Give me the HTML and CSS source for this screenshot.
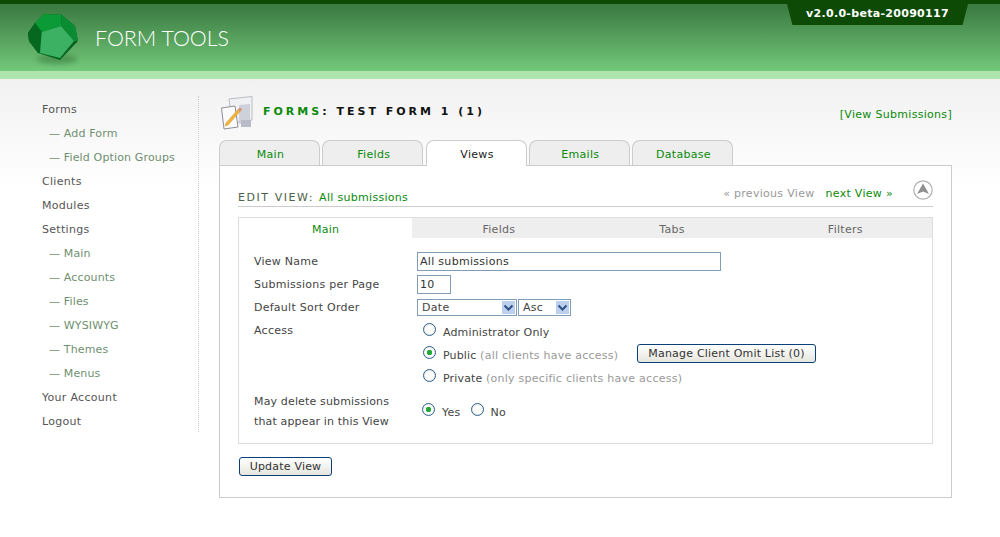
FILE: index.html
```html
<!DOCTYPE html>
<html lang="en">
<head>
    <meta charset="UTF-8">
    <meta name="viewport" content="width=device-width, initial-scale=1.0">
    <title>Form Tools</title>
    <link rel="stylesheet" href="styles.css">
</head>
<body>
    <header class="header">
        <div class="brand">
            <svg class="logo" width="60" height="58" viewBox="0 0 60 58">
                <defs>
                    <filter id="soft" x="-30%" y="-100%" width="160%" height="300%">
                        <feGaussianBlur stdDeviation="2.5"/>
                    </filter>
                </defs>
                <ellipse cx="29" cy="45" rx="20" ry="5" fill="#2c6a30" opacity="0.45" filter="url(#soft)"/>
                <polygon points="16,0 33.6,0.7 47,12 50,27 32,46 10,39 1,27 0,19 7,9" fill="#05641c"/>
                <polygon points="16,0 33.6,0.7 33,12 13.7,18 7,9" fill="#0a9a36"/>
                <polygon points="33.6,0.7 47,12 50,27 46,27 33,12" fill="#0a8c32"/>
                <polygon points="7,9 0,19 1,27 10,39 12,39 13.7,18" fill="#06681f"/>
                <polygon points="13.7,18 33,12 46,27 32,44 12,39" fill="#3cb063"/>
            </svg>
            <span class="brand-name">FORM TOOLS</span>
        </div>
        <div class="version">v2.0.0-beta-20090117</div>
    </header>

    <div class="page">
        <nav class="sidebar">
            <a class="nav-item">Forms</a>
            <a class="nav-item sub">Add Form</a>
            <a class="nav-item sub">Field Option Groups</a>
            <a class="nav-item">Clients</a>
            <a class="nav-item">Modules</a>
            <a class="nav-item">Settings</a>
            <a class="nav-item sub">Main</a>
            <a class="nav-item sub">Accounts</a>
            <a class="nav-item sub">Files</a>
            <a class="nav-item sub">WYSIWYG</a>
            <a class="nav-item sub">Themes</a>
            <a class="nav-item sub">Menus</a>
            <a class="nav-item">Your Account</a>
            <a class="nav-item">Logout</a>
        </nav>

        <main class="content">
            <div class="title-row">
                <svg class="title-icon" width="34" height="36" viewBox="0 0 34 36">
                    <path d="M9 3 L32 0.5 V24 L12 27 Z" fill="#f0f1f4" stroke="#b9bcc3"/>
                    <path d="M19 9 L30 8 V27 L19 28 Z" fill="#cfd1da"/>
                    <path d="M21 24 H31 V31 H21 Z" fill="#b9bcc8"/>
                    <path d="M1.5 12 L15 10 L18 31 L4 33 Z" fill="#fbfbfb" stroke="#8d9097"/>
                    <path d="M6 27 L18 13.5 L20 15.5 L8 29 L5 30 Z" fill="#f2b33d" stroke="#d0952e" stroke-width="0.5"/>
                    <path d="M18 13.5 L20 11.5 L22 13.5 L20 15.5 Z" fill="#d98a6a"/>
                </svg>
                <h1 class="title"><span class="title-green">Forms</span>: Test Form 1 (1)</h1>
                <a class="view-link">[View Submissions]</a>
            </div>

            <div class="tabs">
                <a class="tab">Main</a>
                <a class="tab">Fields</a>
                <a class="tab active">Views</a>
                <a class="tab">Emails</a>
                <a class="tab">Database</a>
            </div>

            <section class="panel">
                <div class="edit-head">
                    <div class="edit-title">EDIT VIEW: <span class="green">All submissions</span></div>
                    <div class="edit-nav">
                        <span class="prev">« previous View</span>
                        <a class="green next">next View »</a>
                        <svg class="up-icon" width="20" height="20" viewBox="0 0 20 20">
                            <circle cx="10" cy="10" r="9.2" fill="#fff" stroke="#b0b0b0" stroke-width="1.2"/>
                            <path d="M10 3.5 L16 14 L10 11.5 L4 14 Z" fill="#8f8f8f"/>
                        </svg>
                    </div>
                </div>

                <div class="inner">
                    <div class="subtabs">
                        <a class="subtab active">Main</a>
                        <a class="subtab">Fields</a>
                        <a class="subtab">Tabs</a>
                        <a class="subtab">Filters</a>
                    </div>
                    <form class="view-form">
                        <label class="row-label">View Name</label>
                        <div class="row-value"><input class="text-input name-input" type="text" value="All submissions"></div>

                        <label class="row-label">Submissions per Page</label>
                        <div class="row-value"><input class="text-input num-input" type="text" value="10"></div>

                        <label class="row-label">Default Sort Order</label>
                        <div class="row-value selects">
                            <div class="select-wrap date-select">
                                <select><option>Date</option></select>
                                <svg class="select-arrow" width="13" height="13" viewBox="0 0 13 13"><rect width="13" height="13" fill="#bcd0ee"/><path d="M2.5 4.5 L6.5 8.5 L10.5 4.5" fill="none" stroke="#2b4f86" stroke-width="2"/></svg>
                            </div>
                            <div class="select-wrap asc-select">
                                <select><option>Asc</option></select>
                                <svg class="select-arrow" width="13" height="13" viewBox="0 0 13 13"><rect width="13" height="13" fill="#bcd0ee"/><path d="M2.5 4.5 L6.5 8.5 L10.5 4.5" fill="none" stroke="#2b4f86" stroke-width="2"/></svg>
                            </div>
                        </div>

                        <label class="row-label access-label">Access</label>
                        <div class="row-value access">
                            <div class="radio-row"><input type="radio" name="access"><span>Administrator Only</span></div>
                            <div class="radio-row"><input type="radio" name="access" checked><span>Public <em>(all clients have access)</em></span><button type="button" class="btn omit-btn">Manage Client Omit List (0)</button></div>
                            <div class="radio-row"><input type="radio" name="access"><span>Private <em>(only specific clients have access)</em></span></div>
                        </div>

                        <label class="row-label delete-label">May delete submissions<br>that appear in this View</label>
                        <div class="row-value yes-no">
                            <input type="radio" name="del" checked><span>Yes</span>
                            <input type="radio" name="del"><span>No</span>
                        </div>
                    </form>
                </div>
                <button type="button" class="btn update-btn">Update View</button>
            </section>
        </main>
    </div>
</body>
</html>
```

FILE: styles.css
```css
* {
    box-sizing: border-box;
}
html, body {
    height: 100%;
}
body {
    margin: 0;
    font-family: "DejaVu Sans", Verdana, sans-serif;
    font-size: 11px;
    color: #444;
    background: #fff;
    overflow: hidden;
}
.header {
    height: 79px;
    display: flex;
    justify-content: space-between;
    background: linear-gradient(#3d7d43 4px, #76cd7e 71px);
    border-top: 4px solid #0c4a05;
    border-bottom: 8px solid #ade5ad;
}
.brand {
    display: flex;
    align-items: flex-start;
    padding: 10px 0 0 28px;
}
.logo {
    display: block;
}
.brand-name {
    margin: 10px 0 0 7px;
    font-family: Lato, sans-serif;
    font-size: 21.4px;
    font-weight: 300;
    line-height: 28px;
    color: #fff;
}
.version {
    width: 181px;
    height: 21px;
    margin-right: 32px;
    background: #0c4a05;
    clip-path: polygon(0 0, 100% 0, 97% 100%, 3% 100%);
    color: #fff;
    font-weight: bold;
    font-size: 11px;
    line-height: 19px;
    text-align: center;
    letter-spacing: 0.3px;
}
.page {
    display: flex;
    align-items: flex-start;
    padding: 17px 48px 0 0;
    background: linear-gradient(#f1f1f1, #fff 110px);
    height: calc(100% - 79px);
}
.sidebar {
    width: 199px;
    flex: none;
    display: flex;
    flex-direction: column;
    padding-left: 42px;
    border-right: 1px dotted #ccc;
}
.nav-item {
    height: 24px;
    line-height: 28px;
    color: #555;
    letter-spacing: 0.3px;
}
.nav-item.sub {
    padding-left: 7px;
    color: #6f8f6f;
    letter-spacing: 0.15px;
}
.nav-item.sub::before {
    content: "— ";
}
.content {
    margin-left: 20px;
    flex: 1;
}
.title-row {
    display: flex;
    align-items: flex-start;
    height: 44px;
}
.title-icon {
    margin-left: 1px;
}
.title {
    margin: 9px 0 0 9px;
    font-size: 11px;
    line-height: 14px;
    font-weight: bold;
    color: #111;
    text-transform: uppercase;
    letter-spacing: 3px;
}
.title-green {
    color: #0a8a0a;
}
.view-link {
    margin: 12px 0 0 auto;
    line-height: 14px;
    color: #0a8a0a;
    letter-spacing: 0.3px;
}
.tabs {
    display: flex;
    gap: 2.25px;
}
.tab {
    width: 101px;
    height: 25px;
    padding-left: 2px;
    line-height: 27px;
    text-align: center;
    background: #eee;
    border: 1px solid #ccc;
    border-bottom: 0;
    border-radius: 8px 8px 0 0;
    color: #0a8a0a;
    letter-spacing: 0.3px;
}
.tab.active {
    height: 26px;
    margin-bottom: -1px;
    position: relative;
    background: #fff;
    color: #222;
}
.panel {
    height: 333px;
    padding: 15px 18px 0 18px;
    background: #fff;
    border: 1px solid #ccc;
}
.edit-head {
    display: flex;
    justify-content: space-between;
    align-items: flex-end;
    height: 26px;
    border-bottom: 1px solid #ccc;
    padding-bottom: 2px;
}
.edit-title {
    color: #4a634a;
    letter-spacing: 1.55px;
}
.green {
    color: #0a8a0a;
    letter-spacing: 0.3px;
}
.edit-nav {
    display: flex;
    align-items: center;
    gap: 12px;
}
.prev {
    margin-left: 1px;
    padding-top: 2px;
    color: #999;
    letter-spacing: 0.3px;
}
.next {
    margin-left: -1px;
    padding-top: 2px;
}
.up-icon {
    margin: 0 0 4px 8px;
}
.inner {
    margin-top: 10px;
    height: 227px;
    border: 1px solid #ddd;
}
.subtabs {
    display: grid;
    grid-template-columns: repeat(4, 1fr);
    height: 20px;
    background: #eee;
}
.subtab {
    text-align: center;
    line-height: 24px;
    color: #666;
    letter-spacing: 0.3px;
}
.subtab.active {
    background: #fff;
    color: #0a8a0a;
}
.view-form {
    display: grid;
    grid-template-columns: 163px 1fr;
    padding: 12px 0 0 15px;
    color: #444;
    letter-spacing: 0.25px;
}
.row-label {
    line-height: 23px;
}
.row-value {
    display: flex;
    align-items: center;
    height: 23px;
}
.text-input {
    height: 19px;
    padding: 0 2px;
    border: 1px solid #7f9db9;
    font: inherit;
    letter-spacing: 0.3px;
    color: #333;
}
.name-input {
    width: 304px;
}
.num-input {
    width: 34px;
}
.select-wrap {
    position: relative;
    height: 17px;
}
.select-wrap select {
    width: 100%;
    height: 17px;
    padding: 0 4px;
    appearance: none;
    border: 1px solid #7f9db9;
    border-radius: 0;
    background: #fff;
    font: inherit;
    letter-spacing: 0.3px;
    color: #444;
}
.select-arrow {
    position: absolute;
    top: 2px;
    right: 2px;
}
.date-select {
    width: 100px;
}
.asc-select {
    width: 53px;
    margin-left: 1px;
}
.access-label {
    line-height: 23px;
}
.access {
    display: block;
    height: 69px;
}
.radio-row {
    display: flex;
    align-items: center;
    height: 23px;
    letter-spacing: 0.15px;
}
input[type="radio"] {
    appearance: none;
    flex: none;
    width: 13px;
    height: 13px;
    margin: 0 0 3px 6px;
    border: 1px solid #2f5f8f;
    border-radius: 50%;
    background: radial-gradient(#fff 40%, #d8d8d0);
}
input[type="radio"]:checked {
    background: radial-gradient(#25a83a 2.5px, #fff 3px, #e8e8e0);
}
.radio-row span {
    margin: 3px 0 0 7px;
}
em {
    font-style: normal;
    color: #999;
    letter-spacing: 0.25px;
}
.btn {
    height: 19px;
    padding: 0 10px;
    border: 1px solid #0a3f7a;
    border-radius: 3px;
    background: linear-gradient(#fff, #e6e6de);
    font: inherit;
    letter-spacing: 0.2px;
    color: #333;
}
.omit-btn {
    margin: 0 0 1px 19px;
}
.delete-label {
    margin-top: 4px;
    line-height: 20px;
    height: 46px;
    letter-spacing: 0.15px;
}
.yes-no {
    margin-top: 3px;
    height: 42px;
}
.yes-no input {
    margin-bottom: 5px;
}
.yes-no span {
    margin: 0 10px 0 7px;
}
.yes-no input + span + input {
    margin-left: 0;
}
.yes-no input:first-child {
    margin-left: 5px;
}
.update-btn {
    margin: 13px 0 0 1px;
    width: 93px;
    padding: 0;
}
```
